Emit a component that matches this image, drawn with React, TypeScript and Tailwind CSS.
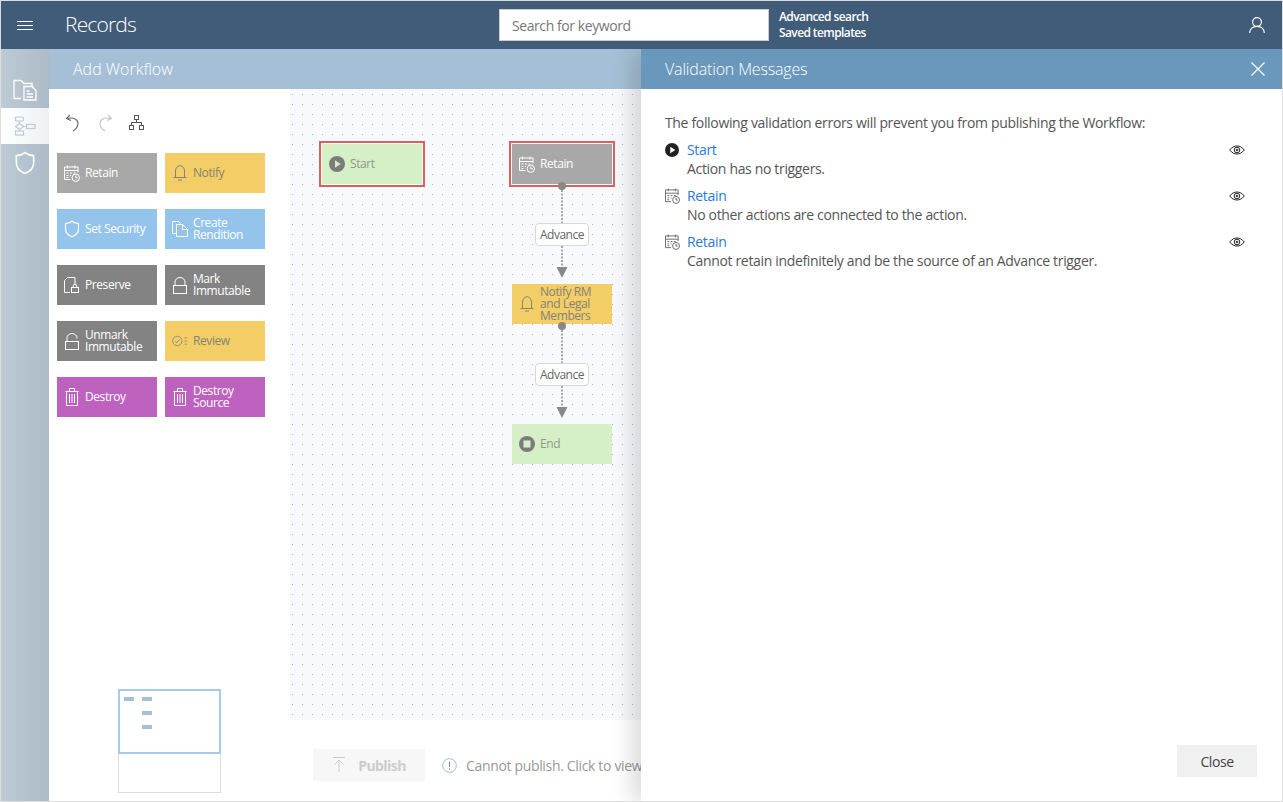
import type { ReactNode } from 'react';
import clsx from 'clsx';

const font = "font-['Open_Sans','Noto_Sans',sans-serif]";

function RetainIcon({ className }: { className?: string }) {
    return (
        <svg viewBox="0 0 16 17" fill="none" stroke="currentColor" strokeWidth="1" className={className}>
            <path d="M6.500 14.500H.5v-12.500h13.500V7.500" />
            <path d="M.5 5.500h13.500M3.500 .5v3M11 .5v3" />
            <path d="M2.500 8h2M6 8h2M9.500 8h2M2.500 10.500h2M6 10.500h1M2.500 12.500h2" />
            <circle cx="11.800" cy="12.700" r="3.700" />
            <path d="M11.800 10.500v2.300h2" />
        </svg>
    );
}

function BellIcon({ className }: { className?: string }) {
    return (
        <svg viewBox="0 0 14 16" fill="none" stroke="currentColor" strokeWidth="1" className={className}>
            <path d="M2.500 12.500V6a4.500 5.300 0 0 1 9 0v6.500" />
            <path d="M.5 12.500h13M5 15h4" />
        </svg>
    );
}

function ShieldIcon({ className }: { className?: string }) {
    return (
        <svg viewBox="0 0 16 18" fill="none" stroke="currentColor" strokeWidth="1.200" className={className}>
            <path d="M8 1.200c2 1.500 4 2.200 6.500 2.300v5.500c0 3.700-2.500 6.200-6.500 7.800-4-1.600-6.500-4.100-6.500-7.800V3.500C4 3.400 6 2.700 8 1.200z" />
        </svg>
    );
}

function CopyIcon({ className }: { className?: string }) {
    return (
        <svg viewBox="0 0 16 16" fill="none" stroke="currentColor" strokeWidth="1" className={className}>
            <path d="M4.500 12.500h-4v-12h6l2 2" />
            <path d="M4.500 3.500h6l5 5v7h-11zM10.500 3.500v5h5" />
        </svg>
    );
}

function PreserveIcon({ className }: { className?: string }) {
    return (
        <svg viewBox="0 0 16 16" fill="none" stroke="currentColor" strokeWidth="1" className={className}>
            <path d="M6 15.500H.5V3.500l3-3h7.500v7" />
            <rect x="7.500" y="10.500" width="7" height="5" />
            <path d="M9.200 10.500V9a1.800 1.800 0 0 1 3.600 0v1.500" />
        </svg>
    );
}

function LockIcon({ className, open }: { className?: string; open?: boolean }) {
    return (
        <svg viewBox="0 0 14 17" fill="none" stroke="currentColor" strokeWidth="1" className={className}>
            <rect x="0.500" y="8.500" width="13" height="8" />
            <path d={open ? 'M2 8.500V5a5 4.500 0 0 1 10 0v.5' : 'M2 8.500V5a5 4.500 0 0 1 10 0v3.500'} />
        </svg>
    );
}

function ReviewIcon({ className }: { className?: string }) {
    return (
        <svg viewBox="0 0 18 12" fill="none" stroke="currentColor" strokeWidth="0.900" className={className}>
            <circle cx="6" cy="6" r="5.300" />
            <path d="M3.500 6.200l1.800 1.800 3.200-3.800M14 2.500h3M14 6h3M14 9.500h3" />
        </svg>
    );
}

function TrashIcon({ className }: { className?: string }) {
    return (
        <svg viewBox="0 0 14 18" fill="none" stroke="currentColor" strokeWidth="1" className={className}>
            <path d="M0.500 3.500h13M4.500 3.500v-3h5v3M1.500 3.500v14h11v-14" />
            <path d="M4.500 6v9M7 6v9M9.500 6v9" />
        </svg>
    );
}

function PlayIcon({ className, inner = 'white' }: { className?: string; inner?: string }) {
    return (
        <svg viewBox="0 0 16 16" className={className}>
            <circle cx="8" cy="8" r="8" fill="currentColor" />
            <path d="M6 4.200l5.800 3.800L6 11.800z" fill={inner} />
        </svg>
    );
}

function StopIcon({ className, inner = 'white' }: { className?: string; inner?: string }) {
    return (
        <svg viewBox="0 0 16 16" className={className}>
            <circle cx="8" cy="8" r="8" fill="currentColor" />
            <rect x="4.500" y="4.500" width="7" height="7" fill={inner} />
        </svg>
    );
}

function EyeIcon() {
    return (
        <svg viewBox="0 0 16 10" fill="none" stroke="#222" strokeWidth="1" className="w-4 h-2.5">
            <path d="M0.700 5C3 2 5.500 1 8 1s5 1 7.300 4C13 8 10.500 9 8 9S3 8 .7 5z" />
            <circle cx="8" cy="5" r="2.800" />
            <circle cx="8" cy="5" r="0.800" fill="#222" />
        </svg>
    );
}

type Tone = 'gray' | 'dark' | 'yellow' | 'blue' | 'purple' | 'green';

const toneClass: Record<Tone, string> = {
    gray: 'bg-[#a8a8a8] text-white',
    dark: 'bg-[#838383] text-white',
    yellow: 'bg-[#f3cd65] text-[#85837a]',
    blue: 'bg-[#94c3ec] text-white',
    purple: 'bg-[#be62c0] text-white',
    green: 'bg-[#d5efc7] text-[#8f9a8c]',
};

function Block({ tone, icon, label, className }: { tone: Tone; icon: ReactNode; label: ReactNode; className?: string }) {
    return (
        <div className={clsx('w-[100px] h-10 flex items-center pl-[7px] overflow-hidden', toneClass[tone], className)}>
            <span className="w-[16px] h-[18px] shrink-0 flex items-center justify-center">{icon}</span>
            <span className="ml-[5px] text-[12px] leading-[12px] tracking-[-0.035em]">{label}</span>
        </div>
    );
}

function Palette() {
    return (
        <div className="grid grid-cols-[100px_100px] gap-x-2 gap-y-4 ml-2 mt-[20px]">
            <Block tone="gray" icon={<RetainIcon className="w-4 h-[17px]" />} label="Retain" />
            <Block tone="yellow" icon={<BellIcon className="w-[14px] h-4" />} label="Notify" />
            <Block tone="blue" icon={<ShieldIcon className="w-4 h-[18px]" />} label="Set Security" />
            <Block tone="blue" icon={<CopyIcon className="w-4 h-4" />} label={<>Create<br />Rendition</>} />
            <Block tone="dark" icon={<PreserveIcon className="w-4 h-4" />} label="Preserve" />
            <Block tone="dark" icon={<LockIcon className="w-[14px] h-[17px]" />} label={<>Mark<br />Immutable</>} />
            <Block tone="dark" icon={<LockIcon open className="w-[14px] h-[17px]" />} label={<>Unmark<br />Immutable</>} />
            <Block tone="yellow" icon={<ReviewIcon className="w-[18px] h-3" />} label="Review" />
            <Block tone="purple" icon={<TrashIcon className="w-[14px] h-[18px]" />} label="Destroy" />
            <Block tone="purple" icon={<TrashIcon className="w-[14px] h-[18px]" />} label={<>Destroy<br />Source</>} />
        </div>
    );
}

function Connector({ top }: { top: number }) {
    // dot, dotted line and arrow between two nodes
    return (
        <svg width="12" height="98" viewBox="0 0 12 98" className="absolute left-[266px]" style={{ top }}>
            <circle cx="6" cy="4" r="4" fill="#888" />
            <path d="M6 8V92" stroke="#a5a5a5" strokeWidth="2" strokeDasharray="2 1.500" />
            <path d="M0.500 85H11.500L6 96z" fill="#888" />
        </svg>
    );
}

function EdgeLabel({ top }: { top: number }) {
    return (
        <div className="absolute left-[245px] w-[54px] h-[23px] bg-white border border-[#d8d8d8] rounded-[4px] flex items-center justify-center text-[12px] tracking-[-0.04em] text-[#666]" style={{ top }}>
            Advance
        </div>
    );
}

function Canvas() {
    return (
        <div className="relative w-[351px] h-[631px] bg-[#f8f9fd] bg-[radial-gradient(circle_at_5.5px_5.5px,#b4b7c0_0.6px,transparent_0.6px)] bg-[length:10px_10px] bg-[position:-3px_0] overflow-hidden">
            <div className="absolute left-[29px] top-[52px] border-2 border-[#d9605f] p-px bg-white">
                <Block tone="green" icon={<PlayIcon inner="#d5efc7" className="w-4 h-4 text-[#7c7c7c]" />} label="Start" className="w-[100px] h-10" />
            </div>
            <div className="absolute left-[219px] top-[52px] border-2 border-[#d9605f] p-px bg-white">
                <Block tone="gray" icon={<RetainIcon className="w-4 h-[17px]" />} label="Retain" />
            </div>
            <Connector top={93} />
            <EdgeLabel top={134} />
            <div className="absolute left-[222px] top-[195px]">
                <Block tone="yellow" icon={<BellIcon className="w-[14px] h-4" />} label={<>Notify RM<br />and Legal<br />Members</>} />
            </div>
            <Connector top={233} />
            <EdgeLabel top={274} />
            <div className="absolute left-[222px] top-[335px]">
                <Block tone="green" icon={<StopIcon inner="#d5efc7" className="w-4 h-4 text-[#7c7c7c]" />} label="End" />
            </div>
        </div>
    );
}

function Minimap() {
    return (
        <div className="absolute left-[69px] top-[600px] w-[103px] h-[104px] border border-[#ddd] bg-white">
            <div className="absolute -left-px -top-px w-[103px] h-[65px] border-2 border-[#a3cbf0]">
                <div className="absolute left-[4px] top-[6px] w-[10px] h-[4px] bg-[#a5c0d6]" />
                <div className="absolute left-[22px] top-[6px] w-[10px] h-[4px] bg-[#a5c0d6]" />
                <div className="absolute left-[22px] top-[20px] w-[10px] h-[4px] bg-[#a5c0d6]" />
                <div className="absolute left-[22px] top-[34px] w-[10px] h-[4px] bg-[#a5c0d6]" />
            </div>
        </div>
    );
}

function Message({ icon, title, text }: { icon: ReactNode; title: string; text: string }) {
    return (
        <div className="flex">
            <span className="w-[22px] h-[19px] flex items-center shrink-0">{icon}</span>
            <div className="flex-1">
                <div className="text-[#2a7ad8] leading-[19px]">{title}</div>
                <div className="text-[#555] leading-[19px]">{text}</div>
            </div>
            <span className="w-[16px] h-[19px] mr-[25px] flex items-center"><EyeIcon /></span>
        </div>
    );
}

function ValidationPanel() {
    return (
        <div className="absolute left-[640px] top-[48px] bottom-0 right-0 bg-white shadow-[-10px_0_20px_rgba(0,0,0,0.14)] flex flex-col z-10">
            <div className="h-10 bg-[#6a98bc] flex items-center justify-between pl-6 pr-[17px] shrink-0">
                <span className="text-[16px] font-light text-white tracking-[-0.01em]">Validation Messages</span>
                <svg viewBox="0 0 14 14" stroke="white" strokeWidth="1.200" className="w-[14px] h-[14px]"><path d="M0.500 0.500l13 13M13.500 0.500l-13 13" /></svg>
            </div>
            <div className="flex-1 pl-6 pr-3 pt-[24px] text-[14px] tracking-[-0.024em]">
                <p className="text-[#555] leading-[19px] mb-[8px]">The following validation errors will prevent you from publishing the Workflow:</p>
                <div className="flex flex-col gap-2">
                    <Message icon={<PlayIcon className="w-[14px] h-[14px] text-[#222]" />} title="Start" text="Action has no triggers." />
                    <Message icon={<RetainIcon className="w-[15px] h-4 text-[#666]" />} title="Retain" text="No other actions are connected to the action." />
                    <Message icon={<RetainIcon className="w-[15px] h-4 text-[#666]" />} title="Retain" text="Cannot retain indefinitely and be the source of an Advance trigger." />
                </div>
            </div>
            <div className="flex justify-end pr-[25px] pb-[24px]">
                <div className="w-20 h-8 bg-[#f0f0f0] flex items-center justify-center text-[14px] tracking-[-0.03em] text-[#444]">Close</div>
            </div>
        </div>
    );
}

export default function App() {
    return (
        <div className={clsx('relative w-[1283px] h-[802px] border border-[#ddd] overflow-hidden flex flex-col bg-white', font)}>
            {/* Header */}
            <div className="h-12 bg-[#415c78] flex items-center shrink-0 relative z-20 text-white">
                <svg viewBox="0 0 16 9" stroke="white" strokeWidth="1" className="w-4 h-[9px] ml-4"><path d="M0 .5h16M0 4.500h16M0 8.500h16" /></svg>
                <span className="ml-[32px] w-[434px] text-[21px] font-light tracking-[-0.04em]">Records</span>
                <div className="w-[270px] h-8 bg-white border border-[#ccc] flex items-center pl-3 text-[14px] tracking-[-0.03em] text-[#777]">Search for keyword</div>
                <div className="ml-[10px] flex flex-col text-[12px] leading-4 font-semibold tracking-[-0.05em]">
                    <span>Advanced search</span>
                    <span>Saved templates</span>
                </div>
                <svg viewBox="0 0 16 16" fill="none" stroke="white" strokeWidth="1.200" className="w-4 h-4 ml-auto mr-[17px]"><circle cx="8" cy="5" r="4.400" /><path d="M.7 16c0-4 3-6.600 7.300-6.600s7.300 2.600 7.300 6.600" /></svg>
            </div>
            <div className="flex flex-1 min-h-0">
                {/* Side nav */}
                <div className="w-12 bg-gradient-to-r from-[#bdcbd5] to-[#adbbc7] shrink-0 flex flex-col items-center pt-[30px] text-white">
                    <svg viewBox="0 0 24 22" fill="none" stroke="white" strokeWidth="1.300" className="w-6 h-[22px]"><path d="M8 19.500H1V1.500h7l3 3h8v3" /><path d="M11 7.500h8l4 4v9.500H11zM13.500 12h3M13.500 15h6.500M13.500 18h6.500" /></svg>
                    <div className="w-full h-9 mt-[7px] bg-gradient-to-r from-white to-[#eef0f2] flex items-center justify-center">
                        <svg viewBox="0 0 22 20" fill="none" stroke="#bccada" strokeWidth="1.200" className="w-[22px] h-5"><rect x="1.500" y="1" width="8" height="4" rx="1" /><path d="M5.500 5v2.500M5.500 7.500l4 3-4 3-4-3zM5.500 13.500V15M9.500 10.500h3" /><rect x="12.500" y="8.500" width="8.500" height="4" /><rect x="1.500" y="15" width="8" height="4" /></svg>
                    </div>
                    <ShieldIcon className="w-[22px] h-[24px] mt-[7px]" />
                </div>
                {/* Main */}
                <div className="flex-1 relative flex flex-col min-w-0">
                    <div className="h-10 bg-[#a5c0d6] flex items-center pl-6 text-white text-[16px] font-light shrink-0">Add Workflow</div>
                    <div className="flex flex-1 relative">
                        <div className="w-[241px] shrink-0">
                            <div className="flex items-center gap-4 ml-4 mt-[23px] h-[21px]">
                                <svg viewBox="0 0 16 18" fill="none" stroke="#666" strokeWidth="1.100" className="w-4 h-[18px]"><path d="M5 1L1.500 4.500 6 6.500M2 4.500c7-1.500 11 1 11 5 0 3-2 5.500-5 7.500" /></svg>
                                <svg viewBox="0 0 16 18" fill="none" stroke="#c4c4c4" strokeWidth="1.100" className="w-4 h-[18px]"><path d="M11 1l3.500 3.500L10 6.500M14 4.500c-7-1.500-11 1-11 5 0 3 2 5.500 5 7.500" /></svg>
                                <svg viewBox="0 0 16 16" fill="none" stroke="#555" strokeWidth="1" className="w-4 h-4"><rect x="5.500" y="0.500" width="4" height="4" /><rect x="0.500" y="10.500" width="4" height="4" /><rect x="10.500" y="10.500" width="4" height="4" /><path d="M7.500 4.500v3M2.500 10.500v-3h10v3" /></svg>
                            </div>
                            <Palette />
                        </div>
                        <div className="flex-1">
                            <Canvas />
                            <div className="flex items-center ml-[23px] mt-[29px]">
                                <div className="w-[112px] h-8 bg-[#f7f7f7] flex items-center justify-center gap-[12px] text-[14px] font-bold tracking-[-0.04em] text-[#ccc]">
                                    <svg viewBox="0 0 14 16" fill="none" stroke="#ccc" strokeWidth="1" className="w-[14px] h-4"><path d="M1 .5h12M7 15V3M2.500 7.500L7 3l4.500 4.500" /></svg>
                                    Publish
                                </div>
                                <svg viewBox="0 0 16 16" fill="none" className="w-[15px] h-[15px] ml-[17px]"><circle cx="8" cy="8" r="7.300" stroke="#8dbcec" /><path d="M8 4v5.500M8 11v1.500" stroke="#777" /></svg>
                                <span className="ml-[9px] whitespace-nowrap text-[14px] tracking-[-0.024em] text-[#999]">Cannot publish. Click to view</span>
                            </div>
                        </div>
                        <Minimap />
                    </div>
                </div>
            </div>
            <ValidationPanel />
        </div>
    );
}
